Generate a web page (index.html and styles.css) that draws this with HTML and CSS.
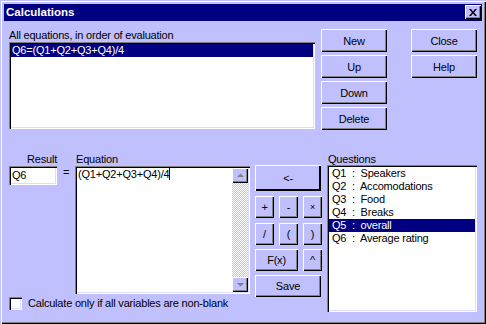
FILE: index.html
```html
<!DOCTYPE html>
<html lang="en">
<head>
    <meta charset="UTF-8">
    <title>Calculations</title>
    <link rel="stylesheet" href="styles.css">
</head>
<body>
    <div class="window">
        <div class="titlebar">
            <span class="title">Calculations</span>
            <button class="close-btn">
                <svg width="8" height="7" viewBox="0 0 8 7"><path d="M0 0h2l2 2.4 2-2.4h2l-3 3.5 3 3.5h-2l-2-2.4-2 2.4h-2l3-3.5z" fill="#000"/></svg>
            </button>
        </div>
        <div class="content">
            <div class="top">
                <div class="eq-box">
                    <div class="label">All equations, in order of evaluation</div>
                    <div class="listbox eq-list">
                        <div class="item selected">Q6=(Q1+Q2+Q3+Q4)/4</div>
                    </div>
                </div>
                <div class="btn-col first">
                    <button class="btn">New</button>
                    <button class="btn">Up</button>
                    <button class="btn">Down</button>
                    <button class="btn">Delete</button>
                </div>
                <div class="btn-col second">
                    <button class="btn">Close</button>
                    <button class="btn">Help</button>
                </div>
            </div>

            <div class="bottom">
                <div class="left">
                    <div class="fields">
                        <div class="result-col">
                            <div class="label result-label">Result</div>
                            <div class="field">Q6</div>
                        </div>
                        <div class="equals">=</div>
                        <div class="eq-col">
                            <div class="label">Equation</div>
                            <div class="textarea">
                                <div class="ta-text">(Q1+Q2+Q3+Q4)/4<span class="caret"></span></div>
                                <div class="scrollbar">
                                    <div class="sb-btn">
                                        <svg width="7" height="5" viewBox="0 0 7 5"><path d="M3.5 0.5L7 4H0z" fill="#808080"/></svg>
                                    </div>
                                    <div class="sb-track"></div>
                                    <div class="sb-btn">
                                        <svg width="7" height="5" viewBox="0 0 7 5"><path d="M0 1h7L3.5 4.5z" fill="#808080"/></svg>
                                    </div>
                                </div>
                            </div>
                        </div>
                    </div>
                    <div class="check-row">
                        <span class="checkbox"></span>
                        <span>Calculate only if all variables are non-blank</span>
                    </div>
                </div>

                <div class="pad">
                    <button class="btn arrow-btn">&lt;-</button>
                    <div class="pad-row r1">
                        <button class="btn small">+</button>
                        <button class="btn small">-</button>
                        <button class="btn small times">×</button>
                    </div>
                    <div class="pad-row r2">
                        <button class="btn small">/</button>
                        <button class="btn small">(</button>
                        <button class="btn small">)</button>
                    </div>
                    <div class="pad-row r3">
                        <button class="btn fx">F(x)</button>
                        <button class="btn small">^</button>
                    </div>
                    <button class="btn save">Save</button>
                </div>

                <div class="q-col">
                    <div class="label">Questions</div>
                    <div class="listbox q-list">
                        <div class="item">Q1  :  Speakers</div>
                        <div class="item">Q2  :  Accomodations</div>
                        <div class="item">Q3  :  Food</div>
                        <div class="item">Q4  :  Breaks</div>
                        <div class="item selected">Q5  :  overall</div>
                        <div class="item">Q6  :  Average rating</div>
                    </div>
                </div>
            </div>
        </div>
    </div>
</body>
</html>
```

FILE: styles.css
```css
* {
    box-sizing: border-box;
}
body {
    margin: 0;
    font-family: "Liberation Sans", Arial, sans-serif;
    font-size: 11px;
    letter-spacing: -0.2px;
    color: #000;
    background-color: #c0c0ff;
}
.window {
    width: 486px;
    height: 324px;
    padding: 4px;
    background-color: #c0c0ff;
    box-shadow: inset 1px 1px #c0c0ff, inset 2px 2px #fff, inset -1px -1px #000, inset -2px -2px #808080;
}
.titlebar {
    height: 17px;
    background-color: #000080;
    color: #fff;
    display: flex;
    justify-content: space-between;
    align-items: flex-start;
}
.title {
    font-weight: bold;
    font-size: 11.5px;
    letter-spacing: 0;
    line-height: 17px;
    padding-left: 2px;
}
.close-btn {
    width: 16px;
    height: 14px;
    margin: 1px 1px 0 0;
    padding: 0;
    border: none;
    background-color: #c0c0ff;
    box-shadow: inset 1px 1px #fff, inset -1px -1px #000, inset -2px -2px #808080;
    display: flex;
    justify-content: center;
    align-items: center;
}
.close-btn svg {
    display: block;
    margin-top: 1px;
}
.content {
    padding: 8px 0 0 5px;
}
.label {
    height: 13px;
    line-height: 13px;
    white-space: nowrap;
}

/* top part */
.top {
    display: flex;
    align-items: flex-start;
}
.eq-box {
    width: 306px;
}
.listbox {
    background-color: #fff;
    padding: 2px;
    box-shadow: inset 1px 1px #808080, inset 2px 2px #000, inset -1px -1px #fff, inset -2px -2px #dcdcff;
}
.eq-list {
    height: 87px;
}
.item {
    height: 13px;
    line-height: 13px;
    padding-left: 1px;
    white-space: pre;
}
.item.selected {
    background-color: #000080;
    color: #fff;
}
.btn-col {
    display: flex;
    flex-direction: column;
    gap: 3px;
}
.btn-col.first {
    margin-left: 6px;
}
.btn-col.second {
    margin-left: 24px;
}
.btn {
    width: 66px;
    height: 23px;
    padding: 0;
    border: none;
    background-color: #c0c0ff;
    font-family: inherit;
    font-size: 11px;
    font-weight: normal;
    letter-spacing: -0.2px;
    color: #000;
    box-shadow: inset 1px 1px #fff, inset -1px -1px #000, inset -2px -2px #808080;
}

/* bottom part */
.bottom {
    display: flex;
    align-items: flex-start;
    margin-top: 23px;
}
.left {
    width: 241px;
}
.fields {
    display: flex;
    align-items: flex-start;
}
.result-col {
    width: 48px;
}
.result-label {
    height: 12px;
    text-align: right;
}
.field {
    height: 19px;
    margin-top: 1px;
    padding: 2px 0 0 3px;
    line-height: 14px;
    background-color: #fff;
    box-shadow: inset 1px 1px #808080, inset 2px 2px #000, inset -1px -1px #fff, inset -2px -2px #dcdcff;
}
.equals {
    width: 18px;
    padding-top: 13px;
    line-height: 13px;
    text-align: center;
}
.eq-col {
    width: 175px;
}
.eq-col .label {
    height: 12px;
    padding-left: 1px;
}
.textarea {
    height: 128px;
    margin-top: 1px;
    padding: 2px;
    display: flex;
    background-color: #fff;
    box-shadow: inset 1px 1px #808080, inset 2px 2px #000, inset -1px -1px #fff, inset -2px -2px #dcdcff;
}
.ta-text {
    flex: 1;
    padding-left: 1px;
    line-height: 13px;
}
.caret {
    display: inline-block;
    width: 1px;
    height: 12px;
    background-color: #000;
    vertical-align: -2px;
}
.scrollbar {
    width: 16px;
    display: flex;
    flex-direction: column;
}
.sb-btn {
    height: 15px;
    background-color: #c0c0ff;
    box-shadow: inset 1px 1px #fff, inset -1px -1px #000, inset -2px -2px #808080;
    display: flex;
    justify-content: center;
    align-items: center;
}
.sb-btn svg {
    display: block;
}
.sb-track {
    flex: 1;
    background-image: repeating-conic-gradient(#fff 0 25%, #c0c0ff 0 50%);
    background-size: 2px 2px;
}
.check-row {
    display: flex;
    align-items: center;
    margin-top: 3px;
    line-height: 13px;
    white-space: nowrap;
}
.checkbox {
    width: 13px;
    height: 13px;
    margin-right: 6px;
    background-color: #fff;
    box-shadow: inset 1px 1px #808080, inset 2px 2px #000, inset -1px -1px #fff, inset -2px -2px #dcdcff;
}

/* operator pad */
.pad {
    width: 67px;
    margin-left: 5px;
    margin-top: 12px;
    display: flex;
    flex-direction: column;
}
.arrow-btn {
    height: 26px;
    box-shadow: inset 1px 1px #fff, inset -1px -1px #000, inset -2px -2px #000;
}
.pad-row {
    display: flex;
    gap: 5px;
}
.pad-row.r1, .pad-row.r2 {
    margin-top: 5px;
}
.pad-row.r3 {
    margin-top: 4px;
}
.btn.small {
    width: 19px;
    height: 22px;
}
.btn.times {
    font-size: 9px;
}
.btn.fx {
    width: 43px;
    height: 22px;
}
.btn.save {
    height: 22px;
    margin-top: 4px;
}

/* questions */
.q-col {
    width: 150px;
    margin-left: 5px;
}
.q-col .label {
    height: 12px;
    padding-left: 1px;
}
.q-list {
    height: 147px;
}
.q-list .item {
    padding-left: 3px;
}
```
